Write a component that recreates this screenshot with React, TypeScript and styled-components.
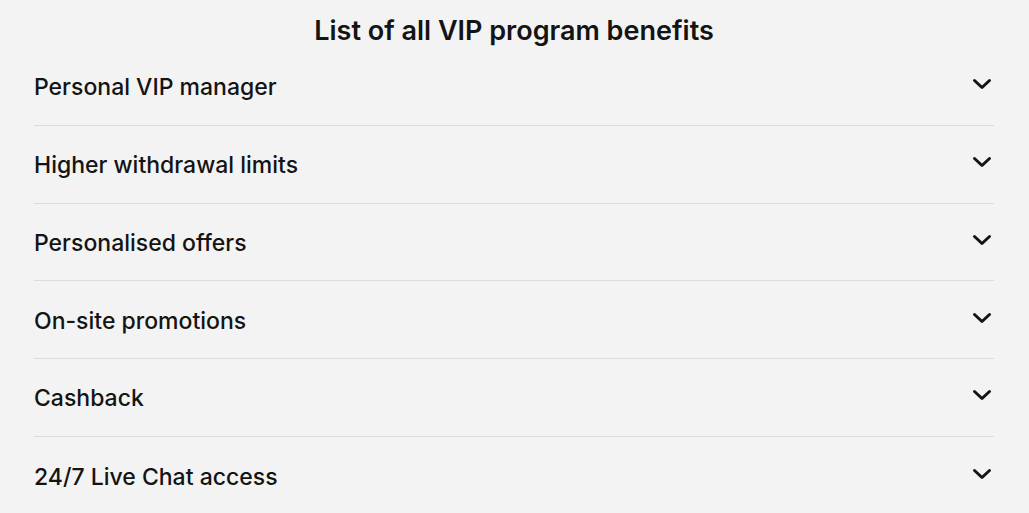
import { FC } from "react";
import styled, { createGlobalStyle } from "styled-components";

const Global = createGlobalStyle`
  body {
    margin: 0;
    background: #f3f3f3;
    font-family: Inter, "Noto Sans", sans-serif;
    color: #141414;
  }
`;

const Page = styled.main`
  padding: 0 35px 0 34px;
`;

const Title = styled.h2`
  margin: 0;
  padding-top: 14px;
  height: 34px;
  line-height: 34px;
  font-size: 27px;
  font-weight: 600;
  text-align: center;
`;

const List = styled.ul`
  list-style: none;
  margin: 0;
  padding: 0;
`;

const Row = styled.li`
  display: flex;
  align-items: center;
  justify-content: space-between;
  box-sizing: border-box;
  height: 77.75px;
  padding-top: 2px;
  border-bottom: 1px solid #dcdcdc;

  &:last-child {
    border-bottom: none;
  }
`;

const Label = styled.span`
  font-size: 23px;
  font-weight: 500;
`;

const Chevron = styled.svg`
  width: 20px;
  height: 12px;
  margin: 0 2px 6px 0;
`;

const benefits = [
  "Personal VIP manager",
  "Higher withdrawal limits",
  "Personalised offers",
  "On-site promotions",
  "Cashback",
  "24/7 Live Chat access",
];

const App: FC = () => (
  <>
    <Global />
    <Page>
      <Title>List of all VIP program benefits</Title>
      <List>
        {benefits.map((b) => (
          <Row key={b}>
            <Label>{b}</Label>
            <Chevron viewBox="0 0 20 12" fill="none">
              <path
                d="M2.5 2.5 L10 9.5 L17.5 2.5"
                stroke="#141414"
                strokeWidth="3"
                strokeLinecap="round"
                strokeLinejoin="round"
              />
            </Chevron>
          </Row>
        ))}
      </List>
    </Page>
  </>
);

export default App;
